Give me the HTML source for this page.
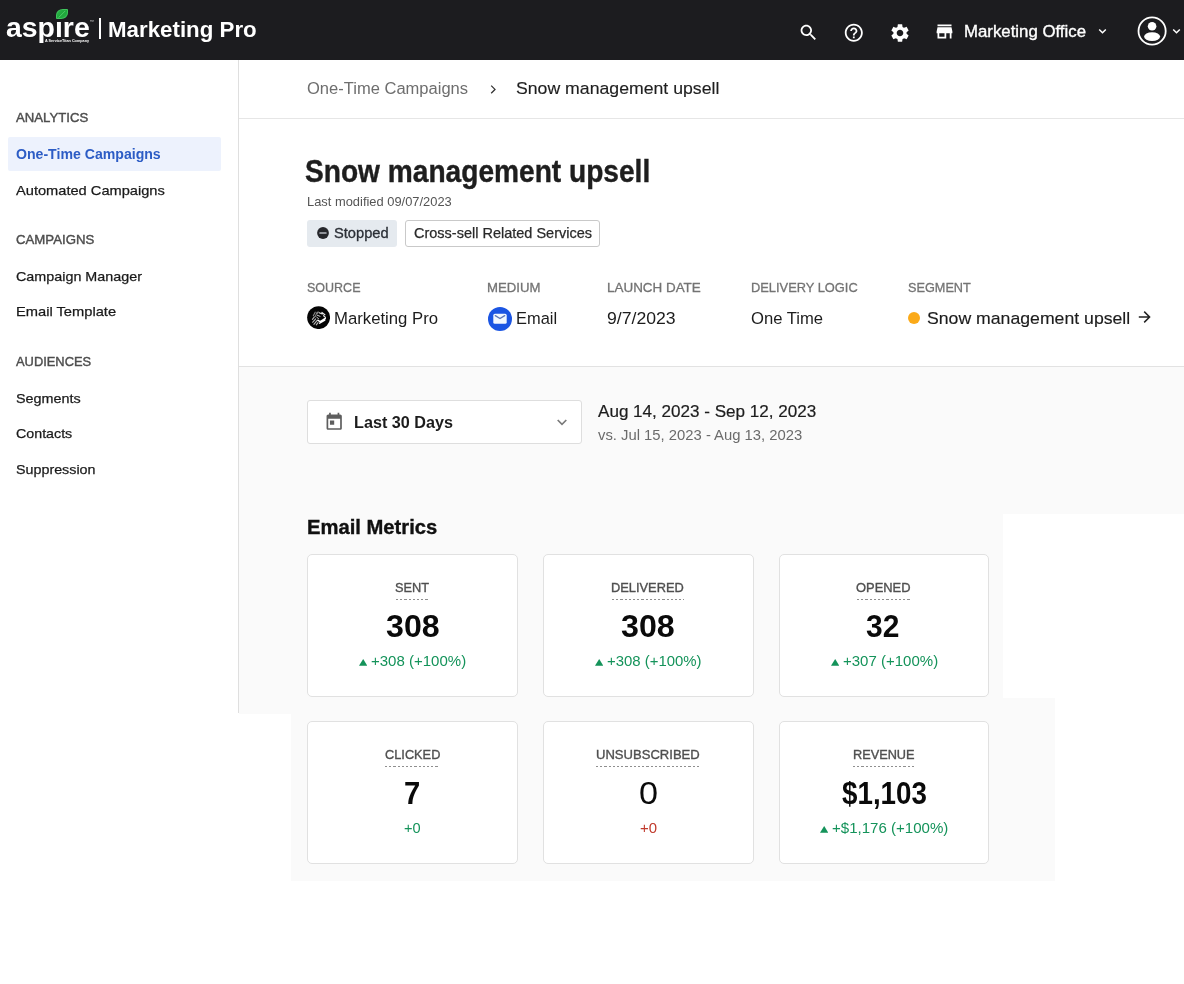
<!DOCTYPE html>
<html lang="en">
<head>
<meta charset="utf-8">
<title>Snow management upsell - Marketing Pro</title>
<style>
html,body{margin:0;padding:0}
body{width:1184px;height:984px;position:relative;overflow:hidden;background:#fff;font-family:"Liberation Sans",sans-serif}
.abs{position:absolute}
.t{position:absolute;white-space:nowrap;line-height:1;transform-origin:0 0;font-family:"Liberation Sans",sans-serif}
.txt{position:absolute;left:0;top:0;width:1184px;height:984px;will-change:transform;display:block}
h1.t,h2.t{margin:0}
a.t{text-decoration:none}
#topbar{position:absolute;left:0;top:0;width:1184px;height:60px;background:#1c1c1f}
#sideline{position:absolute;left:238px;top:60px;width:1px;height:653px;background:#dfdfdf}
#crumbline{position:absolute;left:239px;top:118px;width:945px;height:1px;background:#e6e6e6}
#navsel{position:absolute;left:8px;top:137px;width:212.5px;height:33.5px;background:#edf2fd;border-radius:2px}
#gray1{position:absolute;left:239px;top:366px;width:945px;height:347.5px;background:#fafafa;border-top:1px solid #e2e2e2;box-sizing:border-box}
#white1{position:absolute;left:1002.5px;top:513.5px;width:182px;height:184.5px;background:#fff}
#gray2{position:absolute;left:291px;top:698px;width:763.5px;height:182.5px;background:#fafafa}
#white2{position:absolute;left:1054.500px;top:698px;width:130px;height:16px;background:#fff}
#gray2b{position:absolute;left:239px;top:698px;width:60px;height:15.5px;background:#fafafa}
.card{position:absolute;width:210.500px;height:143px;box-sizing:border-box;background:#fff;border:1px solid #e1e1e1;border-radius:5px}
.dots{position:absolute;height:1.300px;background:repeating-linear-gradient(90deg,#8f8f8f 0,#8f8f8f 2.200px,transparent 2.200px,transparent 4.200px)}
#badge1{position:absolute;left:307.300px;top:220px;width:89.800px;height:26.500px;background:#e5eaef;border-radius:3px}
#badge2{position:absolute;left:405px;top:220px;width:194.800px;height:26.500px;background:#fff;border:1px solid #c9c9c9;border-radius:3px;box-sizing:border-box}
#select{position:absolute;left:307.300px;top:400.400px;width:274.700px;height:43.600px;background:#fff;border:1px solid #dedede;border-radius:3px;box-sizing:border-box}
</style>
</head>
<body>
<div id="topbar"></div>
<div id="sideline"></div>
<div id="crumbline"></div>
<div id="navsel"></div>
<div id="gray1"></div>
<div id="white1"></div>
<div id="gray2"></div>
<div id="white2"></div>
<div id="badge1"></div>
<div id="badge2"></div>
<div id="select"></div>

<!-- logo leaf + divider -->
<div class="abs" style="left:55px;top:14px;width:9px;height:7px;background:#1c1c1f;z-index:5"></div>
<div class="abs" style="left:56.200px;top:8.800px;width:11.700px;height:10.400px;z-index:6;box-sizing:border-box;background:linear-gradient(135deg,#2bb548 0%,#1ea53a 55%,#27b045 100%);border:1px solid #3fc45c;border-radius:58% 8% 58% 8%"></div>
<svg class="abs" style="left:56.200px;top:8.800px;z-index:7" width="11.700" height="10.400" viewBox="0 0 11.700 10.400"><path d="M2.600 8.600 9.400 1.800" stroke="#5ad474" stroke-width="0.800" fill="none"/></svg>
<div class="abs" style="left:99.100px;top:17.700px;width:1.700px;height:21.300px;background:#fff"></div>

<!-- top icons -->
<svg class="abs" style="left:797.8px;top:22.1px" width="21" height="21" viewBox="0 0 24 24"><path fill="#fff" d="M15.5 14h-.79l-.28-.27C15.410 12.590 16 11.110 16 9.500 16 5.910 13.090 3 9.500 3S3 5.910 3 9.500 5.910 16 9.500 16c1.610 0 3.090-.590 4.230-1.570l.27.280v.790l5 4.990L20.490 19l-4.990-5zm-6 0C7.010 14 5 11.990 5 9.500S7.010 5 9.500 5 14 7.010 14 9.500 11.990 14 9.500 14z"/></svg>
<svg class="abs" style="left:843.2px;top:21.900px" width="21.600" height="21.600" viewBox="0 0 24 24"><path fill="#fff" d="M11 18h2v-2h-2v2zm1-16C6.480 2 2 6.480 2 12s4.480 10 10 10 10-4.480 10-10S17.520 2 12 2zm0 18c-4.410 0-8-3.590-8-8s3.590-8 8-8 8 3.590 8 8-3.590 8-8 8zm0-14c-2.210 0-4 1.790-4 4h2c0-1.100.9-2 2-2s2 .9 2 2c0 2-3 1.750-3 5h2c0-2.250 3-2.500 3-5 0-2.210-1.790-4-4-4z"/></svg>
<svg class="abs" style="left:889px;top:21.600px" width="22" height="22" viewBox="0 0 24 24"><path fill="#fff" d="M19.140 12.940c.04-.300.060-.610.060-.940 0-.320-.020-.640-.070-.940l2.030-1.580c.180-.140.230-.410.120-.610l-1.920-3.320c-.120-.220-.370-.290-.590-.220l-2.390.960c-.5-.380-1.030-.700-1.620-.940l-.36-2.540c-.04-.240-.24-.410-.480-.410h-3.840c-.24 0-.43.170-.47.410l-.36 2.540c-.59.240-1.130.570-1.620.940l-2.390-.960c-.22-.080-.47 0-.59.220L2.740 8.870c-.12.210-.08.470.12.610l2.030 1.580c-.05.300-.09.630-.09.940s.02.640.07.940l-2.030 1.580c-.18.140-.23.410-.12.610l1.920 3.320c.12.220.37.290.59.220l2.390-.96c.5.380 1.030.7 1.620.94l.36 2.540c.05.240.24.410.48.410h3.840c.24 0 .44-.17.470-.41l.36-2.540c.59-.24 1.130-.56 1.620-.94l2.390.96c.22.080.47 0 .59-.22l1.920-3.320c.12-.22.070-.47-.12-.61l-2.010-1.580zM12 15.600c-1.980 0-3.600-1.620-3.600-3.600s1.620-3.600 3.600-3.600 3.600 1.620 3.600 3.600-1.620 3.600-3.600 3.600z"/></svg>
<svg class="abs" style="left:934.2px;top:20.800px" width="21" height="21" viewBox="0 0 24 24"><path fill="#fff" d="M20 4H4v2h16V4zm1 10v-2l-1-5H4l-1 5v2h1v6h10v-6h4v6h2v-6h1zm-9 4H6v-4h6v4z"/></svg>
<svg class="abs" style="left:1098px;top:28px" width="9" height="7" viewBox="0 0 9 7"><path d="M1.200 1.500 4.500 4.800 7.800 1.500" stroke="#fff" stroke-width="1.500" fill="none"/></svg>
<svg class="abs" style="left:1172px;top:28px" width="9" height="7" viewBox="0 0 9 7"><path d="M1.200 1.500 4.500 4.800 7.800 1.500" stroke="#fff" stroke-width="1.500" fill="none"/></svg>
<svg class="abs" style="left:1136px;top:15px" width="32" height="32" viewBox="0 0 32 32"><circle cx="16.100" cy="16" r="13.600" stroke="#fff" stroke-width="1.800" fill="none"/><circle cx="16.100" cy="11.200" r="4.300" fill="#fff"/><ellipse cx="16.100" cy="21.600" rx="8" ry="4.300" fill="#fff"/></svg>

<!-- breadcrumb chevron -->
<svg class="abs" style="left:489px;top:84px" width="9" height="11" viewBox="0 0 9 11"><path d="M2.200 1.600 6 5.400 2.200 9.200" stroke="#333" stroke-width="1.300" fill="none"/></svg>

<!-- stopped icon -->
<svg class="abs" style="left:316.600px;top:227px" width="12" height="12" viewBox="0 0 12 12"><circle cx="6" cy="6" r="5.900" fill="#26272b"/><rect x="2.400" y="5.200" width="7.200" height="1.600" rx=".4" fill="#b4b8be"/></svg>

<!-- source icon -->
<svg class="abs" style="left:306.900px;top:306.100px" width="23.200" height="23.200" viewBox="0 0 23.200 23.200"><circle cx="11.600" cy="11.600" r="11.450" fill="#050505"/>
<g fill="none" stroke-linecap="round">
<path d="M6.300 9.800 8.200 6.200M8.400 10.400l1.600-4M10.200 7.600l.9-1.800" stroke="#8a8a8a" stroke-width="1.100"/>
<path d="M5.400 13.300l2-2.400M5.600 16.300l3.100-3.400M6.900 18.300l3.300-4M9.300 18.900l1.700-2.300" stroke="#b9b9b9" stroke-width="1.100"/>
<path d="M12.100 6.700l3.200 1.300M14.900 6.500l3 2.200M16.600 9.700l1.900 1.700" stroke="#e6e6e6" stroke-width="1.200"/>
<path d="M18.300 12.400 13.200 15.600 11 14.400M12.600 17.200l5.200-3.200" stroke="#ffffff" stroke-width="1.500"/>
<path d="M9.700 11.200l1.800 1.400M10.400 9.300l2.600 1" stroke="#d0d0d0" stroke-width="1"/>
</g></svg>

<!-- email icon -->
<svg class="abs" style="left:487.800px;top:306.700px" width="24" height="24" viewBox="0 0 24 24"><circle cx="12" cy="12" r="12" fill="#1b55e3"/><rect x="5.300" y="6.800" width="13.400" height="10" rx="1.600" fill="#f3f8ff"/><path d="M7.300 8.600 12 11.600l4.700-3" stroke="#5f78b8" stroke-width="1.300" fill="none" stroke-linecap="round"/></svg>

<!-- orange dot -->
<div class="abs" style="left:907.500px;top:312.100px;width:12px;height:12px;border-radius:50%;background:#fbaa19"></div>
<!-- arrow -->
<svg class="abs" style="left:1137px;top:309px" width="15" height="16" viewBox="0 0 15 16"><path d="M1.800 8H12.300M7.200 2.600 12.600 8 7.200 13.400" stroke="#222" stroke-width="1.500" fill="none"/></svg>

<!-- calendar icon -->
<svg class="abs" style="left:324.100px;top:411.900px" width="20.400" height="20.400" viewBox="0 0 24 24"><path fill="#5e5e5e" d="M19 3h-1V1h-2v2H8V1H6v2H5c-1.110 0-1.990.9-1.990 2L3 19c0 1.100.89 2 2 2h14c1.100 0 2-.9 2-2V5c0-1.100-.9-2-2-2zm0 16H5V8h14v11zM7 10h5v5H7z"/></svg>
<!-- select chevron -->
<svg class="abs" style="left:556px;top:418px" width="12" height="9" viewBox="0 0 12 9"><path d="M1.700 2 6 6.300 10.300 2" stroke="#7a7a7a" stroke-width="1.700" fill="none"/></svg>

<div class="card" style="left:307px;top:554.0px"></div>
<div class="dots" style="left:395.7px;top:598.7px;width:33.3px"></div>
<svg class="abs" style="left:359.0px;top:658.8px" width="8.4" height="6.8" viewBox="0 0 8.4 6.8"><path d="M4.2 0 8.4 6.8H0z" fill="#14935a"/></svg>
<div class="card" style="left:543px;top:554.0px"></div>
<div class="dots" style="left:611.7px;top:598.7px;width:72.0px"></div>
<svg class="abs" style="left:594.5px;top:658.8px" width="8.4" height="6.8" viewBox="0 0 8.4 6.8"><path d="M4.2 0 8.4 6.8H0z" fill="#14935a"/></svg>
<div class="card" style="left:778.5px;top:554.0px"></div>
<div class="dots" style="left:856.6px;top:598.7px;width:53.7px"></div>
<svg class="abs" style="left:830.5px;top:658.8px" width="8.4" height="6.8" viewBox="0 0 8.4 6.8"><path d="M4.2 0 8.4 6.8H0z" fill="#14935a"/></svg>
<div class="card" style="left:307px;top:721.0px"></div>
<div class="dots" style="left:384.9px;top:765.7px;width:54.6px"></div>
<div class="card" style="left:543px;top:721.0px"></div>
<div class="dots" style="left:596.3px;top:765.7px;width:103.0px"></div>
<div class="card" style="left:778.5px;top:721.0px"></div>
<div class="dots" style="left:852.9px;top:765.7px;width:60.8px"></div>
<svg class="abs" style="left:820.0px;top:825.8px" width="8.4" height="6.8" viewBox="0 0 8.4 6.8"><path d="M4.2 0 8.4 6.8H0z" fill="#14935a"/></svg>
<header class="txt">
<span class="t" style="left:6.46px;top:13.60px;font-size:28px;font-weight:700;color:#fff;transform:scaleX(1.0143);">aspire</span>
<span class="t" style="left:45.39px;top:40.30px;font-size:3.6px;font-weight:700;color:#fff;transform:scaleX(1.0445);">A ServiceTitan Company</span>
<span class="t" style="left:89.47px;top:20.20px;font-size:4.2px;font-weight:400;color:#ddd;">™</span>
<span class="t" style="left:107.75px;top:18.50px;font-size:21.6px;font-weight:700;color:#fff;transform:scaleX(1.0326);">Marketing Pro</span>
<span class="t" style="left:963.80px;top:24.40px;font-size:16.7px;font-weight:400;color:#fff;transform:scaleX(1.0066);-webkit-text-stroke:0.35px #fff;">Marketing Office</span>
</header>
<nav class="txt">
<span class="t" style="left:15.81px;top:111.50px;font-size:12.9px;font-weight:400;color:#4d4d4d;transform:scaleX(1.0210);-webkit-text-stroke:0.4px #4d4d4d;">ANALYTICS</span>
<a class="t" style="left:15.79px;top:148.20px;font-size:13.8px;font-weight:700;color:#2c5cc5;transform:scaleX(1.0221);">One-Time Campaigns</a>
<a class="t" style="left:15.79px;top:183.70px;font-size:13.6px;font-weight:400;color:#1a1a1a;transform:scaleX(1.0762);-webkit-text-stroke:0.25px #1a1a1a;">Automated Campaigns</a>
<span class="t" style="left:15.81px;top:233.90px;font-size:12.9px;font-weight:400;color:#4d4d4d;transform:scaleX(1.0244);-webkit-text-stroke:0.4px #4d4d4d;">CAMPAIGNS</span>
<a class="t" style="left:15.79px;top:270.20px;font-size:13.6px;font-weight:400;color:#1a1a1a;transform:scaleX(1.0547);-webkit-text-stroke:0.25px #1a1a1a;">Campaign Manager</a>
<a class="t" style="left:15.79px;top:304.90px;font-size:13.6px;font-weight:400;color:#1a1a1a;transform:scaleX(1.0801);-webkit-text-stroke:0.25px #1a1a1a;">Email Template</a>
<span class="t" style="left:15.81px;top:356.20px;font-size:12.9px;font-weight:400;color:#4d4d4d;transform:scaleX(0.9994);-webkit-text-stroke:0.4px #4d4d4d;">AUDIENCES</span>
<a class="t" style="left:15.79px;top:392.20px;font-size:13.6px;font-weight:400;color:#1a1a1a;transform:scaleX(1.0571);-webkit-text-stroke:0.25px #1a1a1a;">Segments</a>
<a class="t" style="left:15.79px;top:427.30px;font-size:13.6px;font-weight:400;color:#1a1a1a;transform:scaleX(1.0477);-webkit-text-stroke:0.25px #1a1a1a;">Contacts</a>
<a class="t" style="left:15.79px;top:462.80px;font-size:13.6px;font-weight:400;color:#1a1a1a;transform:scaleX(1.0521);-webkit-text-stroke:0.25px #1a1a1a;">Suppression</a>
</nav>
<main class="txt">
<a class="t" style="left:307.32px;top:81.40px;font-size:16px;font-weight:400;color:#6e6e6e;transform:scaleX(1.0331);">One-Time Campaigns</a>
<span class="t" style="left:515.69px;top:79.90px;font-size:17px;font-weight:400;color:#1f1f1f;transform:scaleX(1.0393);-webkit-text-stroke:0.15px #1f1f1f;">Snow management upsell</span>
<h1 class="t" style="left:304.67px;top:155.50px;font-size:31px;font-weight:700;color:#1e1e1e;transform:scaleX(0.9069);-webkit-text-stroke:0.4px #1e1e1e;">Snow management upsell</h1>
<span class="t" style="left:307.22px;top:196.40px;font-size:12.6px;font-weight:400;color:#555;transform:scaleX(1.0235);">Last modified 09/07/2023</span>
<span class="t" style="left:333.78px;top:225.80px;font-size:14.1px;font-weight:400;color:#2b2f36;transform:scaleX(1.0406);-webkit-text-stroke:0.3px #2b2f36;">Stopped</span>
<span class="t" style="left:413.68px;top:225.80px;font-size:14.1px;font-weight:400;color:#2a2a2a;transform:scaleX(1.0285);-webkit-text-stroke:0.25px #2a2a2a;">Cross-sell Related Services</span>
<span class="t" style="left:307.01px;top:280.50px;font-size:13.1px;font-weight:400;color:#737373;transform:scaleX(0.9546);-webkit-text-stroke:0.3px #737373;">SOURCE</span>
<span class="t" style="left:487.41px;top:280.50px;font-size:13.1px;font-weight:400;color:#737373;transform:scaleX(1.0071);-webkit-text-stroke:0.3px #737373;">MEDIUM</span>
<span class="t" style="left:607.01px;top:280.50px;font-size:13.1px;font-weight:400;color:#737373;transform:scaleX(1.0257);-webkit-text-stroke:0.3px #737373;">LAUNCH DATE</span>
<span class="t" style="left:750.71px;top:280.50px;font-size:13.1px;font-weight:400;color:#737373;transform:scaleX(0.9816);-webkit-text-stroke:0.3px #737373;">DELIVERY LOGIC</span>
<span class="t" style="left:907.71px;top:280.50px;font-size:13.1px;font-weight:400;color:#737373;transform:scaleX(0.9697);-webkit-text-stroke:0.3px #737373;">SEGMENT</span>
<span class="t" style="left:333.51px;top:310.20px;font-size:16.3px;font-weight:400;color:#1c1c1c;transform:scaleX(1.0268);">Marketing Pro</span>
<span class="t" style="left:516.41px;top:310.20px;font-size:16.3px;font-weight:400;color:#1c1c1c;transform:scaleX(1.0088);">Email</span>
<span class="t" style="left:606.89px;top:311.20px;font-size:16.9px;font-weight:400;color:#1c1c1c;transform:scaleX(1.0436);">9/7/2023</span>
<span class="t" style="left:750.61px;top:310.20px;font-size:16.3px;font-weight:400;color:#1c1c1c;transform:scaleX(1.0213);">One Time</span>
<span class="t" style="left:926.59px;top:310.00px;font-size:17px;font-weight:400;color:#1c1c1c;transform:scaleX(1.0388);-webkit-text-stroke:0.15px #1c1c1c;">Snow management upsell</span>
<span class="t" style="left:353.81px;top:414.00px;font-size:16.4px;font-weight:700;color:#1c1c1c;transform:scaleX(0.9875);">Last 30 Days</span>
<span class="t" style="left:598.20px;top:403.90px;font-size:16.8px;font-weight:400;color:#1c1c1c;transform:scaleX(1.0172);-webkit-text-stroke:0.2px #1c1c1c;">Aug 14, 2023 - Sep 12, 2023</span>
<span class="t" style="left:598.26px;top:428.20px;font-size:14.6px;font-weight:400;color:#6b6b6b;transform:scaleX(1.0152);">vs. Jul 15, 2023 - Aug 13, 2023</span>
<h2 class="t" style="left:307.11px;top:518.10px;font-size:19.8px;font-weight:700;color:#101010;transform:scaleX(1.0215);-webkit-text-stroke:0.35px #101010;">Email Metrics</h2>
<span class="t" style="left:395.32px;top:582.40px;font-size:12.8px;font-weight:400;color:#4f4f4f;transform:scaleX(0.9979);-webkit-text-stroke:0.35px #4f4f4f;">SENT</span>
<span class="t" style="left:385.78px;top:611.80px;font-size:30.8px;font-weight:700;color:#0a0a0a;transform:scaleX(1.0439);">308</span>
<span class="t" style="left:371.38px;top:653.90px;font-size:14.1px;font-weight:400;color:#14935a;transform:scaleX(1.0651);">+308 (+100%)</span>
<span class="t" style="left:611.32px;top:582.40px;font-size:12.8px;font-weight:400;color:#4f4f4f;transform:scaleX(1.0030);-webkit-text-stroke:0.35px #4f4f4f;">DELIVERED</span>
<span class="t" style="left:620.68px;top:611.80px;font-size:30.8px;font-weight:700;color:#0a0a0a;transform:scaleX(1.0459);">308</span>
<span class="t" style="left:607.18px;top:653.90px;font-size:14.1px;font-weight:400;color:#14935a;transform:scaleX(1.0584);">+308 (+100%)</span>
<span class="t" style="left:856.22px;top:582.40px;font-size:12.8px;font-weight:400;color:#4f4f4f;transform:scaleX(1.0078);-webkit-text-stroke:0.35px #4f4f4f;">OPENED</span>
<span class="t" style="left:865.78px;top:611.80px;font-size:30.8px;font-weight:700;color:#0a0a0a;transform:scaleX(0.9732);">32</span>
<span class="t" style="left:842.58px;top:653.90px;font-size:14.1px;font-weight:400;color:#14935a;transform:scaleX(1.0651);">+307 (+100%)</span>
<span class="t" style="left:384.52px;top:749.40px;font-size:12.8px;font-weight:400;color:#4f4f4f;transform:scaleX(0.9982);-webkit-text-stroke:0.35px #4f4f4f;">CLICKED</span>
<span class="t" style="left:404.08px;top:778.80px;font-size:30.8px;font-weight:700;color:#0a0a0a;transform:scaleX(0.9479);">7</span>
<span class="t" style="left:404.18px;top:820.90px;font-size:14.1px;font-weight:400;color:#14935a;transform:scaleX(1.0353);">+0</span>
<span class="t" style="left:595.92px;top:749.40px;font-size:12.8px;font-weight:400;color:#4f4f4f;transform:scaleX(1.0205);-webkit-text-stroke:0.35px #4f4f4f;">UNSUBSCRIBED</span>
<span class="t" style="left:638.58px;top:778.80px;font-size:30.8px;font-weight:400;color:#0a0a0a;transform:scaleX(1.1113);">0</span>
<span class="t" style="left:639.68px;top:820.90px;font-size:14.1px;font-weight:400;color:#c0392b;transform:scaleX(1.0602);">+0</span>
<span class="t" style="left:852.52px;top:749.40px;font-size:12.8px;font-weight:400;color:#4f4f4f;transform:scaleX(0.9950);-webkit-text-stroke:0.35px #4f4f4f;">REVENUE</span>
<span class="t" style="left:841.58px;top:778.80px;font-size:30.8px;font-weight:700;color:#0a0a0a;transform:scaleX(0.9018);">$1,103</span>
<span class="t" style="left:831.98px;top:820.90px;font-size:14.1px;font-weight:400;color:#14935a;transform:scaleX(1.0682);">+$1,176 (+100%)</span>
</main>
</body>
</html>
